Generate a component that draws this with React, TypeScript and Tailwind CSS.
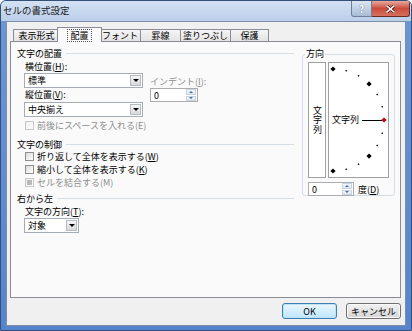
import type { ReactNode } from "react";

const jp = "font-['Noto_Sans_CJK_JP','Noto_Sans',sans-serif]";

function Key({ k }: { k: string }) {
  return <span className="underline underline-offset-[1px]">{k}</span>;
}

function Heading({ text, className = "" }: { text: string; className?: string }) {
  return (
    <div className={`h-[10px] flex items-center ${className}`}>
      <span className="text-[9px] leading-none pl-px">{text}</span>
      <span className="flex-1 h-px bg-[#d5dfe5] ml-[4px]" />
    </div>
  );
}

function Arrow() {
  return (
    <span className="w-0 h-0 border-l-[3px] border-r-[3px] border-t-[3px] border-l-transparent border-r-transparent border-t-black" />
  );
}

function Select({ value, width }: { value: string; width: string }) {
  return (
    <div className={`${width} h-[15px] border border-[#a5acb5] bg-white flex items-center`}>
      <span className="flex-1 pl-[3px] text-[9px] leading-none">{value}</span>
      <span className="w-[11px] h-[11px] mr-px border border-[#b4bcc7] bg-gradient-to-b from-[#f6f6f6] to-[#d9d9d9] flex items-center justify-center">
        <Arrow />
      </span>
    </div>
  );
}

function Spin({ width }: { width: string }) {
  return (
    <div className={`${width} h-[14px] border border-[#abadb3] bg-white flex items-center`}>
      <span className="flex-1 pl-[3px] text-[9px] leading-none">0</span>
      <span className="w-[10px] h-[12px] mr-px flex flex-col gap-px">
        <span className="flex-1 bg-gradient-to-b from-[#f3f6fa] to-[#dfe7f1] border border-[#c8d4e2] flex items-center justify-center">
          <span className="w-0 h-0 border-l-[2px] border-r-[2px] border-b-[2px] border-l-transparent border-r-transparent border-b-[#4d6a8c]" />
        </span>
        <span className="flex-1 bg-gradient-to-b from-[#f3f6fa] to-[#dfe7f1] border border-[#c8d4e2] flex items-center justify-center">
          <span className="w-0 h-0 border-l-[2px] border-r-[2px] border-t-[2px] border-l-transparent border-r-transparent border-t-[#4d6a8c]" />
        </span>
      </span>
    </div>
  );
}

function Check({ label, disabled = false, filled = false, className = "" }: { label: ReactNode; disabled?: boolean; filled?: boolean; className?: string }) {
  return (
    <div className={`h-[10px] flex items-center pl-[9px] ${className}`}>
      <span
        className={`w-[9px] h-[9px] border ${disabled ? "border-[#c8c8c8] from-[#eeeeee]" : "border-[#8e8f8f] from-[#dcdcdc]"} bg-gradient-to-br to-white flex items-center justify-center`}
      >
        {filled && <span className="w-[5px] h-[5px] bg-[#b9b9b9]" />}
      </span>
      <span className={`ml-[3px] text-[9px] leading-none ${disabled ? "text-[#8d8d8d]" : ""}`}>{label}</span>
    </div>
  );
}

function Dial() {
  const cx = 4;
  const cy = 57;
  const r = 51;
  const marks = [];
  for (let a = 90; a >= -90; a -= 15) {
    const rad = (a * Math.PI) / 180;
    const x = cx + r * Math.cos(rad);
    const y = cy - r * Math.sin(rad);
    const big = a % 45 === 0;
    const s = big ? 2.6 : 1;
    marks.push(
      <polygon
        key={a}
        points={`${x},${y - s} ${x + s},${y} ${x},${y + s} ${x - s},${y}`}
        fill={a === 0 ? "#c00000" : "#000"}
      />
    );
  }
  return (
    <div className="relative w-[61px] h-[116px] border border-[#a0a0a0] bg-white">
      <svg width="59" height="114" className="block">
        {marks}
        <line x1="33" y1="57.5" x2="53" y2="57.5" stroke="#000" strokeWidth="1" />
      </svg>
      <span className="absolute left-[3px] top-[52px] text-[9px] leading-none">文字列</span>
    </div>
  );
}

function Tab({ label, width, selected = false }: { label: string; width: string; selected?: boolean }) {
  if (selected) {
    return (
      <div className={`${width} h-[15px] -ml-[3px] -mr-[2px] -mb-px relative z-10 border border-b-0 border-[#898c95] bg-[#fafafa] flex items-center justify-center`}>
        <span className="px-[2px] py-px border border-dotted border-[#555] text-[9px] leading-none">{label}</span>
      </div>
    );
  }
  return (
    <div className={`${width} h-[12px] -ml-px first:ml-0 border border-b-0 border-[#898c95] bg-gradient-to-b from-[#f5f5f5] to-[#e3e3e3] flex items-center justify-center`}>
      <span className="text-[9px] leading-none">{label}</span>
    </div>
  );
}

function Button({ label, primary = false }: { label: string; primary?: boolean }) {
  return (
    <div
      className={`w-[55px] h-[16px] rounded-[3px] border flex items-center justify-center text-[9px] leading-none ${
        primary
          ? "border-[#3c7fb1] bg-gradient-to-b from-[#eaf6fd] to-[#bee6fd] shadow-[inset_0_0_0_1px_#bfe3f5]"
          : "border-[#707070] bg-gradient-to-b from-[#f2f2f2] to-[#d5d5d5] shadow-[inset_0_0_0_1px_#fcfcfc]"
      }`}
    >
      {label}
    </div>
  );
}

export default function App() {
  return (
    <div className={`w-[412px] h-[331px] ${jp} text-black`}>
      <div className="w-full h-full flex flex-col border border-[#34507a] rounded-t-[6px] bg-gradient-to-b from-[#6c97d4] to-[#5684cc] overflow-hidden">
        {/* title bar */}
        <div className="h-[20px] flex items-start bg-gradient-to-b from-[#d3e1f3] to-[#bccfe9]">
          <span className="mt-[5px] ml-[2px] text-[9.5px] leading-none text-[#1b1b1b]">セルの書式設定</span>
          <div className="ml-auto mr-[1px] flex">
            <div className="w-[21px] h-[16px] rounded-bl-[3px] border border-t-0 border-[#6d7f99] bg-gradient-to-b from-[#dbe5f1] to-[#a9bcd6] flex items-center justify-center text-[10px] font-bold leading-none text-white [text-shadow:0_0_1px_#2d3f5c]">
              ?
            </div>
            <div className="w-[38px] h-[16px] rounded-br-[3px] border border-t-0 border-l-0 border-[#6b2a25] bg-gradient-to-b from-[#e7a99e] via-[#c94c3d] to-[#d7705e] flex items-center justify-center">
              <svg width="9" height="8" viewBox="0 0 9 8">
                <path d="M1 1 L8 7 M8 1 L1 7" stroke="#4a1410" strokeWidth="3" strokeLinecap="square" />
                <path d="M1 1 L8 7 M8 1 L1 7" stroke="#fff" strokeWidth="1.6" strokeLinecap="square" />
              </svg>
            </div>
          </div>
        </div>

        {/* client */}
        <div className="flex-1 mx-[5px] mb-[4px] border border-[#7d8ea6] bg-[#f0f0f0] flex flex-col">
          <div className="h-[19px] pl-[6px] flex items-end">
            <Tab label="表示形式" width="w-[47px]" />
            <Tab label="配置" width="w-[45px]" selected />
            <Tab label="フォント" width="w-[42px]" />
            <Tab label="罫線" width="w-[41px]" />
            <Tab label="塗りつぶし" width="w-[51px]" />
            <Tab label="保護" width="w-[39px]" />
          </div>

          <div className="h-[257px] ml-[3px] mr-[4px] border border-[#898c95] bg-[#fafafa] flex pl-[5px]">
            {/* left column */}
            <div className="w-[278px] flex flex-col">
              <Heading text="文字の配置" className="mt-[6px]" />
              <div className="flex">
                <div className="ml-[8px] w-[119px] flex flex-col">
                  <div className="mt-[3px] h-[10px] pl-px flex items-center text-[9px] leading-none">
                    <span>横位置(<Key k="H" />):</span>
                  </div>
                  <Select value="標準" width="w-[119px] mt-[2px]" />
                  <div className="mt-px h-[10px] pl-px flex items-center text-[9px] leading-none">
                    <span>縦位置(<Key k="V" />):</span>
                  </div>
                  <Select value="中央揃え" width="w-[119px] mt-[3px]" />
                </div>
                <div className="ml-[7px] flex flex-col">
                  <div className="mt-[18px] h-[10px] flex items-center text-[9px] leading-none text-[#8d8d8d]">
                    <span>インデント(<Key k="I" />):</span>
                  </div>
                  <Spin width="w-[48px] mt-[2px]" />
                </div>
              </div>
              <Check className="mt-[3px]" disabled label="前後にスペースを入れる(E)" />

              <Heading text="文字の制御" className="mt-[9px]" />
              <Check className="mt-[2px]" label={<>折り返して全体を表示する(<Key k="W" />)</>} />
              <Check className="mt-[3px]" label={<>縮小して全体を表示する(<Key k="K" />)</>} />
              <Check className="mt-[3px]" disabled filled label="セルを結合する(M)" />

              <Heading text="右から左" className="mt-[6px]" />
              <div className="mt-[3px] h-[10px] pl-[9px] flex items-center text-[9px] leading-none">
                <span>文字の方向(<Key k="T" />):</span>
              </div>
              <div className="mt-[2px] pl-[8px]">
                <Select value="対象" width="w-[55px]" />
              </div>
            </div>

            {/* orientation group */}
            <div className="relative ml-[8px] mt-[12px] w-[93px] h-[142px] border border-[#d5dfe5] rounded-[3px] pl-[5px] pt-[7px] flex flex-col">
              <span className="absolute left-[2px] -top-[6px] px-px bg-[#fafafa] text-[9px] leading-none">方向</span>
              <div className="flex gap-[2px]">
                <div className="w-[18px] h-[116px] border border-[#a0a0a0] bg-white flex items-center justify-center">
                  <span className="[writing-mode:vertical-rl] text-[9px] leading-[10px] tracking-[0.5px]">文字列</span>
                </div>
                <Dial />
              </div>
              <div className="mt-[4px] flex items-center">
                <Spin width="w-[46px]" />
                <span className="ml-[4px] text-[9px] leading-none">
                  度(<Key k="D" />)
                </span>
              </div>
            </div>
          </div>

          <div className="mt-[5px] pr-[4px] flex justify-end gap-[9px]">
            <Button label="OK" primary />
            <Button label="キャンセル" />
          </div>
        </div>
      </div>
    </div>
  );
}
